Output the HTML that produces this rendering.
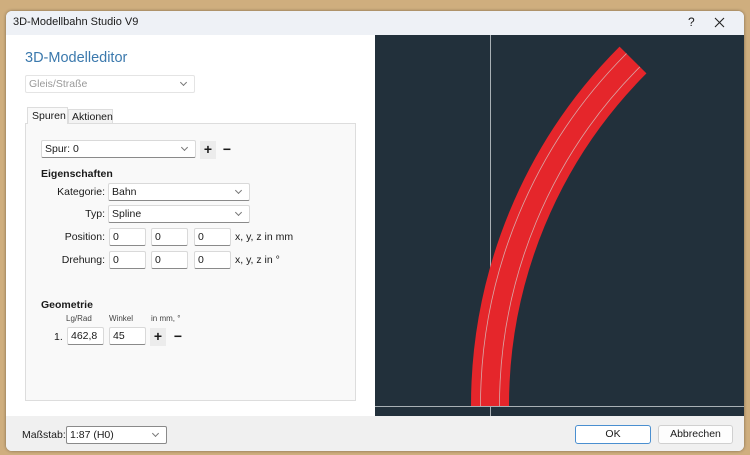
<!DOCTYPE html>
<html><head><meta charset="utf-8"><style>
*{box-sizing:border-box;margin:0;padding:0}
body{width:750px;height:455px;background:#cfae7e;font-family:"Liberation Sans",sans-serif;font-size:10.5px;color:#1a1a1a;position:relative;overflow:hidden}
.a{position:absolute}
.win{left:6px;top:11px;width:738px;height:440px;background:#fff;border-radius:6px;overflow:hidden;box-shadow:0 0 3px rgba(0,0,0,.4)}
.tb{left:0;top:0;width:738px;height:24px;background:#eef1f6}
.inp{position:absolute;background:#fff;border:1px solid #d9d9d9;border-bottom:1px solid #8a8a8a;border-radius:2px;padding:2px 3px;height:18px;line-height:13px}
.cb::after{content:"";position:absolute;right:8px;top:4px;width:4px;height:4px;border-right:1px solid #777;border-bottom:1px solid #777;transform:rotate(45deg)}
.btn{position:absolute;font-size:14px;font-weight:bold;line-height:16px;width:16px;height:18px;text-align:center}
.lbl{position:absolute;text-align:right;width:70px}
</style></head><body>
<div class="a win">
 <div class="a tb"><span class="a" style="left:7px;top:5px;font-size:11px">3D-Modellbahn Studio V9</span>
 <span class="a" style="left:682px;top:4px;font-size:12px">?</span>
 <svg class="a" style="left:708px;top:6px" width="11" height="11"><path d="M1 1L10 10M10 1L1 10" stroke="#222" stroke-width="1.1"/></svg></div>
 <div class="a" style="left:0;top:24px;width:369px;height:381px;background:#fff"></div>
 <div class="a" style="left:19px;top:39px;font-size:14.5px;color:#3b79ad">3D-Modelleditor</div>
 <div class="inp cb" style="left:19px;top:64px;width:170px;color:#999;border-color:#e4e4e4">Gleis/Straße</div>
 <div class="a" style="left:21px;top:96px;width:41px;height:17px;border:1px solid #ddd;border-bottom:none;background:#f9f9f9;padding:2px 4px;z-index:2">Spuren</div>
 <div class="a" style="left:62px;top:98px;width:45px;height:14px;border:1px solid #ddd;border-bottom:none;background:#f3f3f3;padding:1px 3px">Aktionen</div>
 <div class="a" style="left:19px;top:112px;width:331px;height:278px;background:#f9f9f9;border:1px solid #ddd"></div>
 <div class="inp cb" style="left:35px;top:129px;width:155px">Spur: 0</div>
 <div class="btn" style="left:194px;top:130px;background:#ececec">+</div><div class="btn" style="left:213px;top:130px">−</div>
 <div class="a" style="left:35px;top:157px;font-weight:bold">Eigenschaften</div>
 <div class="lbl" style="left:29px;top:175px">Kategorie:</div><div class="inp cb" style="left:102px;top:172px;width:142px">Bahn</div>
 <div class="lbl" style="left:29px;top:197px">Typ:</div><div class="inp cb" style="left:102px;top:194px;width:142px">Spline</div>
 <div class="lbl" style="left:29px;top:220px">Position:</div>
 <div class="inp" style="left:103px;top:217px;width:37px">0</div><div class="inp" style="left:145px;top:217px;width:37px">0</div><div class="inp" style="left:188px;top:217px;width:37px">0</div>
 <div class="a" style="left:229px;top:220px">x, y, z in mm</div>
 <div class="lbl" style="left:29px;top:243px">Drehung:</div>
 <div class="inp" style="left:103px;top:240px;width:37px">0</div><div class="inp" style="left:145px;top:240px;width:37px">0</div><div class="inp" style="left:188px;top:240px;width:37px">0</div>
 <div class="a" style="left:229px;top:243px">x, y, z in °</div>
 <div class="a" style="left:35px;top:288px;font-weight:bold">Geometrie</div>
 <div class="a" style="left:60px;top:303px;font-size:8px;color:#444">Lg/Rad</div>
 <div class="a" style="left:103px;top:303px;font-size:8px;color:#444">Winkel</div>
 <div class="a" style="left:145px;top:303px;font-size:8px;color:#444">in mm, °</div>
 <div class="a" style="left:48px;top:320px">1.</div>
 <div class="inp" style="left:61px;top:316px;width:37px">462,8</div><div class="inp" style="left:103px;top:316px;width:37px">45</div>
 <div class="btn" style="left:144px;top:317px;background:#ececec">+</div><div class="btn" style="left:164px;top:317px">−</div>
 <svg class="a" style="left:369px;top:24px" width="369" height="381" viewBox="375 35 369 381">
  <rect x="375" y="35" width="369" height="381" fill="#22303b"/>
  <line x1="490.5" y1="35" x2="490.5" y2="416" stroke="#a9b0b5" stroke-width="1"/>
  <line x1="375" y1="406.5" x2="744" y2="406.5" stroke="#a9b0b5" stroke-width="1"/>
  <path d="M490,406 A489,489 0 0 1 633,60" fill="none" stroke="#e5262b" stroke-width="38"/>
  <path d="M480.5,406 A498.5,498.5 0 0 1 626.5,53.5" fill="none" stroke="#d9a8a8" stroke-width="0.8"/>
  <path d="M499.5,406 A479.5,479.5 0 0 1 639.9,66.9" fill="none" stroke="#d9a8a8" stroke-width="0.8"/>
 </svg>
 <div class="a" style="left:0;top:405px;width:738px;height:35px;background:#f0f0f0"></div>
 <div class="a" style="left:16px;top:418px">Maßstab:</div>
 <div class="inp cb" style="left:60px;top:415px;width:101px;border-color:#8a8a8a">1:87 (H0)</div>
 <div class="a" style="left:569px;top:414px;width:76px;height:19px;border:1px solid #4a8fd0;border-radius:3px;background:#fff;text-align:center;line-height:17px">OK</div>
 <div class="a" style="left:652px;top:414px;width:75px;height:19px;border:1px solid #d0d0d0;border-radius:3px;background:#fdfdfd;text-align:center;line-height:17px">Abbrechen</div>
</div>
</body></html>
